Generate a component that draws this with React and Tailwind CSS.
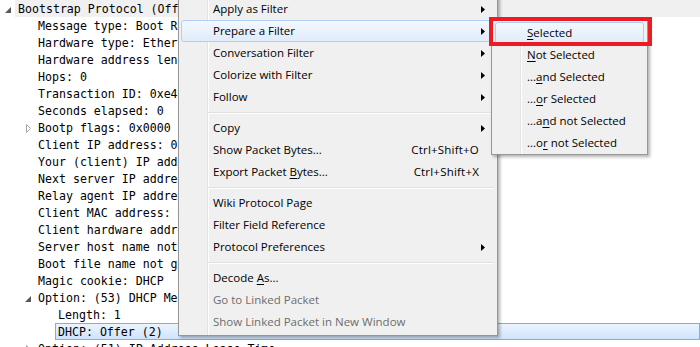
import React from "react";

// packet detail tree rows
const ROWS = [
  { level: 0, text: "Bootstrap Protocol (Offer)", toggle: "open", hover: true },
  { level: 1, text: "Message type: Boot Reply (2)" },
  { level: 1, text: "Hardware type: Ethernet (0x01)" },
  { level: 1, text: "Hardware address length: 6" },
  { level: 1, text: "Hops: 0" },
  { level: 1, text: "Transaction ID: 0xe4d1a3b2" },
  { level: 1, text: "Seconds elapsed: 0" },
  { level: 1, text: "Bootp flags: 0x0000 (Unicast)", toggle: "closed" },
  { level: 1, text: "Client IP address: 0.0.0.0 (0.0.0.0)" },
  { level: 1, text: "Your (client) IP address: 192.168.1.100" },
  { level: 1, text: "Next server IP address: 0.0.0.0" },
  { level: 1, text: "Relay agent IP address: 0.0.0.0" },
  { level: 1, text: "Client MAC address: 00:0b:82:01:fc:42" },
  { level: 1, text: "Client hardware address padding: 00000000" },
  { level: 1, text: "Server host name not given" },
  { level: 1, text: "Boot file name not given" },
  { level: 1, text: "Magic cookie: DHCP" },
  { level: 1, text: "Option: (53) DHCP Message Type (Offer)", toggle: "open" },
  { level: 2, text: "Length: 1" },
  { level: 2, text: "DHCP: Offer (2)", selected: true },
  { level: 1, text: "Option: (51) IP Address Lease Time", toggle: "closed" },
];

const INDENT = ["w-0", "w-[20px]", "w-[40px]"];

const Toggle = ({ kind }) => {
  if (kind === "open")
    return (
      <svg width="6" height="6" className="ml-[5px] mt-[2px]">
        <polygon points="6,0 6,6 0,6" fill="#595959" />
      </svg>
    );
  if (kind === "closed")
    return (
      <svg width="5" height="9" className="ml-[6px] mt-[1px]">
        <polygon points="0.5,0.5 4.5,4.5 0.5,8.5" fill="#fff" stroke="#a6a6a6" strokeWidth="1" />
      </svg>
    );
  return null;
};

const TreeRow = ({ row }) => (
  <div className="flex h-[17px] items-stretch">
    <div className={`${INDENT[row.level]} shrink-0`} />
    <div className="flex w-[15px] shrink-0 items-center">
      <Toggle kind={row.toggle} />
    </div>
    <div
      className={`flex flex-1 items-center whitespace-nowrap border px-[2px] pt-[2px] ${
        row.selected
          ? "border-[#84acdd] bg-gradient-to-b from-[#ebf4fe] to-[#cfe4fd]"
          : row.hover
          ? "border-transparent bg-[#f0f0f0]"
          : "border-transparent"
      }`}
    >
      {row.text}
    </div>
  </div>
);

const Arrow = () => (
  <svg width="4" height="7" className="shrink-0">
    <polygon points="0,0 4,3.5 0,7" fill="#000" />
  </svg>
);

const MenuItem = ({ label, shortcut, sub, active, disabled }) => (
  <div
    className={`flex h-[22px] items-center rounded-[3px] border pl-[31px] pr-[9px] ${
      active ? "border-[#aecff7] bg-gradient-to-b from-[#f3f8fe] to-[#e0ecfb]" : "border-transparent"
    } ${disabled ? "text-[#6d6d6d]" : "text-black"}`}
  >
    <span className="flex-1 whitespace-nowrap">{label}</span>
    {shortcut && <span className="mr-[6px] whitespace-nowrap tracking-[0.2px]">{shortcut}</span>}
    {sub && <Arrow />}
  </div>
);

const Sep = () => (
  <div className="ml-[27px] mr-[1px] flex h-[9px] flex-col justify-center">
    <div className="h-[1px] bg-[#e0e0e0]" />
    <div className="h-[1px] bg-white" />
  </div>
);

const U = ({ children }) => <span className="underline underline-offset-[2px]">{children}</span>;

const menuBg =
  "bg-[linear-gradient(to_right,#f0f0f0_28px,#e2e3e3_28px,#e2e3e3_29px,#ffffff_29px,#ffffff_30px,#f0f0f0_30px)]";

export default function App() {
  return (
    <div className="relative h-[347px] w-[700px] overflow-hidden bg-white">
      <div className="font-['DejaVu_Sans_Mono',monospace] text-[11.6px] leading-[15px] text-black">
        {ROWS.map((r, i) => (
          <TreeRow key={i} row={r} />
        ))}
      </div>

      {/* context menu */}
      <div
        className={`absolute left-[178px] top-[-5px] w-[320px] border border-[#979797] p-[2px] shadow-[2px_2px_3px_rgba(0,0,0,0.3)] font-['Open_Sans',sans-serif] text-[11.5px] ${menuBg}`}
      >
        <MenuItem label="Apply as Filter" sub />
        <MenuItem label="Prepare a Filter" sub active />
        <MenuItem label="Conversation Filter" sub />
        <MenuItem label="Colorize with Filter" sub />
        <MenuItem label="Follow" sub />
        <Sep />
        <MenuItem label="Copy" sub />
        <MenuItem label="Show Packet Bytes..." shortcut="Ctrl+Shift+O" />
        <MenuItem label={<>Export Packet <U>B</U>ytes...</>} shortcut="Ctrl+Shift+X" />
        <Sep />
        <MenuItem label="Wiki Protocol Page" />
        <MenuItem label="Filter Field Reference" />
        <MenuItem label="Protocol Preferences" sub />
        <Sep />
        <MenuItem label={<>Decode <U>A</U>s...</>} />
        <MenuItem label="Go to Linked Packet" disabled />
        <MenuItem label="Show Linked Packet in New Window" disabled />
      </div>

      {/* submenu */}
      <div
        className={`absolute left-[491px] top-[18px] w-[157px] border border-[#979797] px-[3px] pt-[3px] shadow-[2px_2px_3px_rgba(0,0,0,0.3)] font-['Open_Sans',sans-serif] text-[11.5px] ${menuBg}`}
      >
        <MenuItem label={<><U>S</U>elected</>} active />
        <MenuItem label={<><U>N</U>ot Selected</>} />
        <MenuItem label={<>...<U>a</U>nd Selected</>} />
        <MenuItem label={<>...<U>o</U>r Selected</>} />
        <MenuItem label={<>...a<U>n</U>d not Selected</>} />
        <MenuItem label={<>...o<U>r</U> not Selected</>} />
      </div>

      {/* red annotation box */}
      <div className="absolute left-[489px] top-[17px] h-[29px] w-[163px] border-4 border-[#ed1c24]" />
    </div>
  );
}
